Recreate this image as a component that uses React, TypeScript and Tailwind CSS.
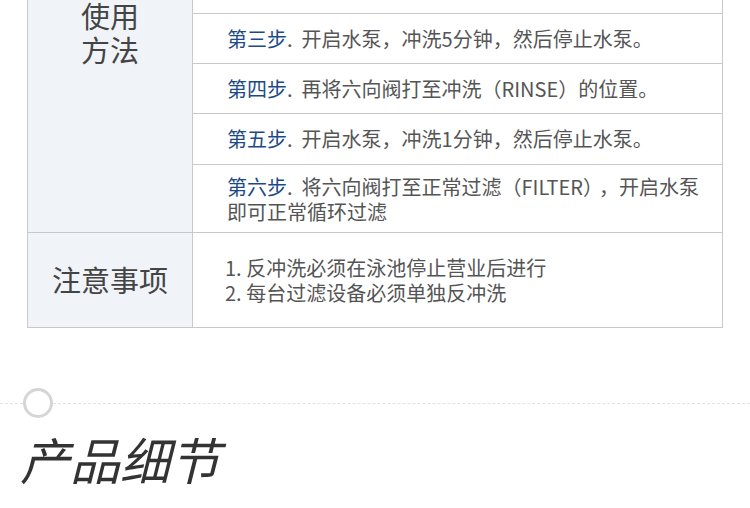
const steps = [
  { label: '第三步', text: '开启水泵，冲洗5分钟，然后停止水泵。' },
  { label: '第四步', text: '再将六向阀打至冲洗（RINSE）的位置。' },
  { label: '第五步', text: '开启水泵，冲洗1分钟，然后停止水泵。' },
];

export default function App() {
  return (
    <div className="w-[750px] h-[508px] overflow-hidden bg-white font-['Noto_Sans_CJK_SC',sans-serif]">
      {/* table */}
      <div className="ml-[27px] w-[696px] border-x border-b border-[#c9c9c9]">
        <div className="flex border-b border-[#c9c9c9]">
          <div className="w-[165px] shrink-0 border-r border-[#c9c9c9] bg-[#f0f3f7] text-center text-[29px] leading-[34px] text-[#444]">
            <p className="-mt-[2px]">
              使用
              <br />
              方法
            </p>
          </div>
          <div className="flex-1 text-[20px] text-[#555]">
            <div className="h-[14px] border-b border-[#c9c9c9]" />
            {steps.map((s, i) => (
              <div
                key={s.label}
                className={`flex items-center border-b border-[#c9c9c9] pl-[34px] ${i === 2 ? 'h-[51px]' : 'h-[50px]'}`}
              >
                <span className="text-[#1d4a86]">{s.label}</span>
                <span>.&nbsp;&nbsp;{s.text}</span>
              </div>
            ))}
            <div className="flex h-[67px] items-center pl-[34px] leading-[25px]">
              <p>
                <span className="text-[#1d4a86]">第六步</span>.&nbsp;&nbsp;将六向阀打至正常过滤（FILTER）<span className="ml-[6px]">，</span>开启水泵
                <br />
                即可正常循环过滤
              </p>
            </div>
          </div>
        </div>
        <div className="flex h-[94px]">
          <div className="flex w-[165px] shrink-0 items-center justify-center border-r border-[#c9c9c9] bg-[#f0f3f7] text-[29px] text-[#444]">
            注意事项
          </div>
          <div className="flex flex-1 items-center pl-[32px] text-[20px] leading-[25px] text-[#555]">
            <p>
              1. 反冲洗必须在泳池停止营业后进行
              <br />
              2. 每台过滤设备必须单独反冲洗
            </p>
          </div>
        </div>
      </div>

      {/* section title */}
      <div className="mt-[60px] flex h-[30px] items-center">
        <div className="w-[23px] border-t border-dashed border-[#e2e2e2]" />
        <div className="h-[30px] w-[30px] shrink-0 rounded-full border-[3px] border-[#d5d5d5] bg-white" />
        <div className="flex-1 border-t border-dashed border-[#e2e2e2]" />
      </div>
      <h2 className="mt-[15px] pl-[20px] text-[50px] leading-none italic text-[#333]">产品细节</h2>
    </div>
  );
}
